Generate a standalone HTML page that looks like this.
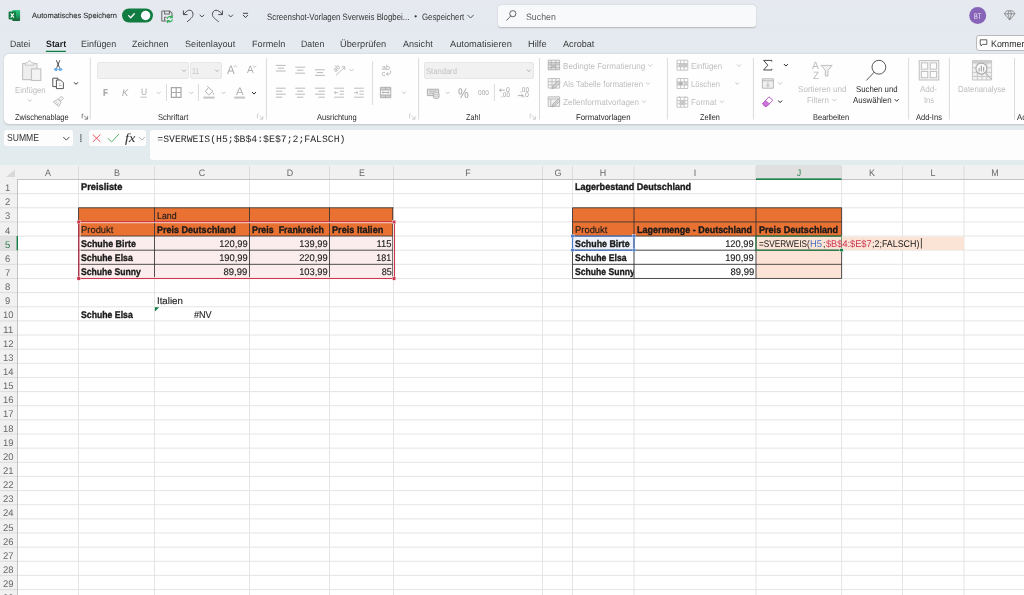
<!DOCTYPE html>
<html lang="de"><head><meta charset="utf-8"><title>Excel</title>
<style>
html,body{margin:0;padding:0}
body{width:1024px;height:595px;overflow:hidden;background:linear-gradient(180deg,#E6E9F0 0px,#E4EAEF 60px,#E2EBEE 165px,#E2EBEE 100%);font-family:"Liberation Sans", sans-serif;position:relative}
.t{position:absolute;white-space:pre;line-height:1;display:block;text-rendering:geometricPrecision}
.abs{position:absolute}

.rib{position:absolute;left:3.8px;top:53.8px;width:1030px;height:70px;background:#FEFEFE;border-radius:5px;box-shadow:0 0.5px 2px rgba(0,0,0,.16)}
.box{position:absolute;background:#FDFDFD;border-radius:2.5px}
.combo{position:absolute;background:#F1F1F1;border-radius:3px;top:62px;height:16.5px;box-shadow:inset 0 0 0 0.7px #E2E2E2}
svg{position:absolute;left:0;top:0;overflow:visible}

</style></head><body>
<div class="abs" style="left:497.8px;top:5px;width:258.6px;height:21.8px;background:#F8F9FA;border-radius:3px;box-shadow:0 0.5px 1.5px rgba(0,0,0,.22)"></div><div class="abs" style="left:976px;top:34.9px;width:60px;height:16.4px;background:#FDFDFD;border:0.8px solid #B9B9B9;border-radius:3px;box-sizing:border-box"></div><div class="rib"></div><div class="combo" style="left:96.6px;width:92.0px"></div><div class="combo" style="left:190.2px;width:31.4px"></div><div class="combo" style="left:424px;width:109.8px"></div><div class="box" style="left:3.8px;top:130px;width:69.6px;height:16px"></div><div class="box" style="left:88.7px;top:130px;width:57.3px;height:16px"></div><div class="box" style="left:149.8px;top:130px;width:880px;height:30px;border-radius:3px"></div><svg width="1024" height="595" viewBox="0 0 1024 595"><rect x="0" y="165.0" width="1024" height="430.0" fill="#fff"/>
<rect x="0" y="165.0" width="1024" height="14.5" fill="#F1F1F1"/>
<rect x="0" y="165.0" width="17.5" height="430.0" fill="#F1F1F1"/>
<rect x="756" y="165.0" width="85.6" height="14.5" fill="#E0E0E0"/>
<rect x="0" y="236.06" width="17.5" height="14.14" fill="#E1E1E1"/>
<path d="M17.5 193.64H1024M17.5 207.78H1024M17.5 221.92H1024M17.5 236.06H1024M17.5 250.20H1024M17.5 264.34H1024M17.5 278.48H1024M17.5 292.62H1024M17.5 306.76H1024M17.5 320.90H1024M17.5 335.04H1024M17.5 349.18H1024M17.5 363.32H1024M17.5 377.46H1024M17.5 391.60H1024M17.5 405.74H1024M17.5 419.88H1024M17.5 434.02H1024M17.5 448.16H1024M17.5 462.30H1024M17.5 476.44H1024M17.5 490.58H1024M17.5 504.72H1024M17.5 518.86H1024M17.5 533.00H1024M17.5 547.14H1024M17.5 561.28H1024M17.5 575.42H1024M17.5 589.56H1024M17.5 603.70H1024M78.5 179.5V595M154.5 179.5V595M249.5 179.5V595M329.5 179.5V595M393.5 179.5V595M542.5 179.5V595M572.5 179.5V595M634.0 179.5V595M756.0 179.5V595M841.6 179.5V595M902.5 179.5V595M964.0 179.5V595" stroke="#E2E2E2" stroke-width="0.9" fill="none"/>
<path d="M78.5 166.0V179.5M154.5 166.0V179.5M249.5 166.0V179.5M329.5 166.0V179.5M393.5 166.0V179.5M542.5 166.0V179.5M572.5 166.0V179.5M634.0 166.0V179.5M756.0 166.0V179.5M841.6 166.0V179.5M902.5 166.0V179.5M964.0 166.0V179.5M0 193.64H17.5M0 207.78H17.5M0 221.92H17.5M0 236.06H17.5M0 250.20H17.5M0 264.34H17.5M0 278.48H17.5M0 292.62H17.5M0 306.76H17.5M0 320.90H17.5M0 335.04H17.5M0 349.18H17.5M0 363.32H17.5M0 377.46H17.5M0 391.60H17.5M0 405.74H17.5M0 419.88H17.5M0 434.02H17.5M0 448.16H17.5M0 462.30H17.5M0 476.44H17.5M0 490.58H17.5M0 504.72H17.5M0 518.86H17.5M0 533.00H17.5M0 547.14H17.5M0 561.28H17.5M0 575.42H17.5M0 589.56H17.5M0 603.70H17.5" stroke="#D9D9D9" stroke-width="0.9" fill="none"/>
<path d="M17.5 179.5H1024M17.5 179.0V595" stroke="#BCBCBC" stroke-width="0.9" fill="none"/>
<path d="M15 169.4V176.9H5.8z" fill="#D9D9D9"/>
<rect x="756" y="178.4" width="85.6" height="1.5" fill="#107C41"/>
<rect x="16.6" y="236.06" width="1.4" height="14.14" fill="#107C41"/>
<rect x="78.5" y="207.78" width="314.6" height="28.28" fill="#E97132"/>
<rect x="78.5" y="236.06" width="314.6" height="42.42" fill="#FBECED"/>
<path d="M78.5 207.78H393.5M78.5 236.06H393.5M78.5 250.20H393.5M78.5 264.34H393.5M78.5 278.48H393.5M78.5 207.78V278.48M154.5 207.78V278.48M249.5 207.78V278.48M329.5 207.78V278.48M392.7 207.78V278.48" stroke="#333333" stroke-width="0.85" fill="none"/>
<rect x="80.0" y="222.72" width="313.4" height="54.66" fill="none" stroke="#FFF6F2" stroke-width="0.9"/>
<rect x="78.9" y="221.62" width="315.6" height="56.86" fill="none" stroke="#C9364E" stroke-width="1.1"/>
<rect x="77.00" y="220.22" width="3.4" height="3.4" fill="#C9364E" stroke="#fff" stroke-width="0.4"/>
<rect x="392.40" y="220.22" width="3.4" height="3.4" fill="#C9364E" stroke="#fff" stroke-width="0.4"/>
<rect x="77.00" y="276.78" width="3.4" height="3.4" fill="#C9364E" stroke="#fff" stroke-width="0.4"/>
<rect x="392.40" y="276.78" width="3.4" height="3.4" fill="#C9364E" stroke="#fff" stroke-width="0.4"/>
<path d="M154.9 307.16h4.3l-4.3 4.3z" fill="#107C41"/>
<rect x="572.5" y="207.78" width="269.1" height="28.28" fill="#E97132"/>
<rect x="756" y="236.06" width="85.6" height="42.42" fill="#FBE3D6"/>
<rect x="841.6" y="236.66" width="122.4" height="13.34" fill="#FBE3D6"/>
<rect x="572.5" y="236.06" width="61.5" height="14.14" fill="#EDF2FA"/>
<path d="M572.5 207.78H841.6M572.5 221.92H841.6M572.5 236.06H841.6M572.5 250.20H841.6M572.5 264.34H841.6M572.5 278.48H841.6M572.5 207.78V278.48M634 207.78V278.48M756 207.78V278.48M841.6 207.78V278.48" stroke="#333333" stroke-width="0.85" fill="none"/>
<rect x="572.5" y="236.06" width="61.5" height="14.14" fill="none" stroke="#4A78C8" stroke-width="1.2"/>
<rect x="570.90" y="234.46" width="3.2" height="3.2" fill="#4A78C8" stroke="#fff" stroke-width="0.4"/>
<rect x="632.40" y="234.46" width="3.2" height="3.2" fill="#4A78C8" stroke="#fff" stroke-width="0.4"/>
<rect x="570.90" y="248.60" width="3.2" height="3.2" fill="#4A78C8" stroke="#fff" stroke-width="0.4"/>
<rect x="632.40" y="248.60" width="3.2" height="3.2" fill="#4A78C8" stroke="#fff" stroke-width="0.4"/>
<rect x="756" y="236.06" width="85.6" height="14.14" fill="none" stroke="#107C41" stroke-width="1.05"/>
<rect x="841.6" y="235.66" width="2" height="14.94" fill="#FBE3D6"/>
<rect x="839.8" y="248.60" width="3.4" height="3.2" fill="#107C41" stroke="#fff" stroke-width="0.5"/>
<path d="M921.4 238.06V248.60" stroke="#222" stroke-width="0.8"/></svg><svg width="1024" height="165" viewBox="0 0 1024 165" style="will-change:transform"><defs><linearGradient id="xg" x1="0" y1="0" x2="0" y2="1"><stop offset="0" stop-color="#33C481"/><stop offset=".5" stop-color="#21A366"/><stop offset="1" stop-color="#185C37"/></linearGradient></defs>
<rect x="12.2" y="9.9" width="7.9" height="11.2" rx="1" fill="url(#xg)"/>
<rect x="8.6" y="11.6" width="7.4" height="7.8" rx=".8" fill="#107C41"/>
<path d="M10.7 13.4l3.2 4.2M13.9 13.4l-3.2 4.2" stroke="#fff" stroke-width="1.1" fill="none"/>
<rect x="122" y="8.6" width="31" height="13.8" rx="6.9" fill="#107C41"/>
<circle cx="145.6" cy="15.5" r="4.7" fill="#fff"/>
<path d="M128.6 15.6l2.1 2.1 3.6-4" fill="none" stroke="#fff" stroke-width="1.3" stroke-linecap="round" stroke-linejoin="round"/>
<path d="M161.8 11h8l2.2 2.2v3M166.4 20.9h-4.6V11M164.6 11v3h4.8v-3M164.6 20.9v-3.6h2" fill="none" stroke="#6A6A6A" stroke-width="1.05" stroke-linejoin="round"/>
<path d="M167.4 18.4a2.5 2.5 0 0 1 4.4-1M172.2 19.8a2.5 2.5 0 0 1-4.4 1M172.2 15.8v1.9h-1.9M167.4 22.4v-1.9h1.9" fill="none" stroke="#35B05C" stroke-width="1.25" stroke-linecap="round" stroke-linejoin="round"/>
<path d="M183.4 10.9v3.7h3.7M183.7 14.3C185.5 11.6 188 10.2 189.8 10.2 192 10.2 193 12.4 193 14.6 193 17.2 190 19.5 187.3 21.6" fill="none" stroke="#4A4A4A" stroke-width="1" stroke-linecap="round" stroke-linejoin="round"/>
<path d="M199.95 15.00L201.90 17.00L203.85 15.00" fill="none" stroke="#444" stroke-width="0.95" stroke-linecap="round" stroke-linejoin="round"/>
<path d="M222.4 10.9v3.7h-3.7M222.1 14.3C220.3 11.6 217.8 10.2 216 10.2 213.8 10.2 212.4 12.4 212.4 14.6 212.4 17.2 215.8 19.5 218.5 21.6" fill="none" stroke="#4A4A4A" stroke-width="1" stroke-linecap="round" stroke-linejoin="round"/>
<path d="M228.75 15.00L230.70 17.00L232.65 15.00" fill="none" stroke="#444" stroke-width="0.95" stroke-linecap="round" stroke-linejoin="round"/>
<path d="M243 13.3h5" stroke="#444" stroke-width="1" fill="none"/>
<path d="M243.30 15.20L245.50 17.60L247.70 15.20" fill="none" stroke="#444" stroke-width="1" stroke-linecap="round" stroke-linejoin="round"/>
<path d="M467.80 15.20L470.60 18.00L473.40 15.20" fill="none" stroke="#444" stroke-width="0.9" stroke-linecap="round" stroke-linejoin="round"/>
<circle cx="512.8" cy="13.7" r="3.1" fill="none" stroke="#555" stroke-width="0.9"/><path d="M510.7 16l-4 4.3" stroke="#555" stroke-width="0.9" stroke-linecap="round"/>
<circle cx="977.7" cy="15.4" r="8.5" fill="#8764B8"/>
<path d="M1006.7 10.8h6l2.3 3-5.3 6.2-5.3-6.2zM1004.6 13.8h10.2M1007.9 13.8l1.8 6M1011.5 13.8l-1.8 6M1007.9 13.8l1.2-3M1011.5 13.8l-1.2-3" fill="none" stroke="#777" stroke-width="0.75" stroke-linejoin="round"/>
<rect x="45.7" y="50.7" width="20.3" height="1.2" rx=".6" fill="#107C41"/>
<path d="M980.2 39.8h6.6v4.6h-4.2l-1.6 1.6v-1.6h-.8z" fill="none" stroke="#444" stroke-width="0.85" stroke-linejoin="round"/>
<path d="M22.6 63.6h14.4v16h-14.4z" fill="#EEEEEE" stroke="#C4C4C4" stroke-width="1.1" stroke-linejoin="round"/>
<path d="M25.4 65.2v-2.4h2.2l2-2.6 2 2.6h2.2v2.4z" fill="#F6F6F6" stroke="#C4C4C4" stroke-width="0.9" stroke-linejoin="round"/>
<rect x="31.5" y="68.9" width="9.3" height="11.6" fill="#F3F3F3" stroke="#C2C2C2" stroke-width="1.1"/>
<path d="M28.20 99.75L29.80 101.45L31.40 99.75" fill="none" stroke="#BEBEBE" stroke-width="0.85" stroke-linecap="round" stroke-linejoin="round"/>
<path d="M56.3 60.2l3.2 7.6M59.9 60.2l-3.2 7.6" stroke="#4A4A4A" stroke-width="0.95" fill="none"/>
<ellipse cx="55.9" cy="69.4" rx="1.5" ry="1" fill="#8CC3F0" stroke="#2F8DDC" stroke-width="0.8"/><ellipse cx="60.4" cy="69.4" rx="1.5" ry="1" fill="#8CC3F0" stroke="#2F8DDC" stroke-width="0.8"/>
<path d="M56.4 86.6h-3.6v-8.4h5.2M58 78.2v1.6" fill="none" stroke="#444" stroke-width="0.9"/>
<path d="M56.4 80h4.2l2.8 2.8v5.8h-7z" fill="#FDFDFD" stroke="#444" stroke-width="0.9" stroke-linejoin="round"/><path d="M59 85.6h2.6M59 83.8h1.4" stroke="#888" stroke-width="0.7"/>
<path d="M74.30 82.60L76.00 84.40L77.70 82.60" fill="none" stroke="#2A2A2A" stroke-width="1" stroke-linecap="round" stroke-linejoin="round"/>
<path d="M61.2 96.2l2.4 2.2-2.6 2.8-2.4-2.2zM58 99.2l3.2 3-2.4 4.4-5.6-4.8zM55.2 103.2l1.8-1.2M57 104.8l1.6-1.4" fill="#F2F2F2" stroke="#BDBDBD" stroke-width="0.9" stroke-linejoin="round"/>
<path d="M82.20 118.40V114.20M82.20 114.20H83.40M84.20 115.80L87.40 119.00M87.60 116.20V119.20H84.60" fill="none" stroke="#666" stroke-width="0.8"/>
<path d="M90.3 58V119.5" stroke="#D6D6D6" stroke-width="0.9" fill="none"/>
<path d="M182.40 69.95L184.00 71.65L185.60 69.95" fill="none" stroke="#A8A8A8" stroke-width="0.85" stroke-linecap="round" stroke-linejoin="round"/>
<path d="M215.40 69.95L217.00 71.65L218.60 69.95" fill="none" stroke="#A8A8A8" stroke-width="0.85" stroke-linecap="round" stroke-linejoin="round"/>
<path d="M233.90 66.90L235.20 65.50L236.50 66.90" fill="none" stroke="#AFAFAF" stroke-width="0.7" stroke-linecap="round" stroke-linejoin="round"/>
<path d="M253.30 65.90L254.60 67.30L255.90 65.90" fill="none" stroke="#AFAFAF" stroke-width="0.7" stroke-linecap="round" stroke-linejoin="round"/>
<path d="M140.4 97.2h6.4" stroke="#B4B4B4" stroke-width="0.8"/>
<path d="M157.10 92.15L158.70 93.85L160.30 92.15" fill="none" stroke="#BEBEBE" stroke-width="0.85" stroke-linecap="round" stroke-linejoin="round"/>
<path d="M166.5 84V101" stroke="#D6D6D6" stroke-width="0.9" fill="none"/>
<path d="M171.4 87.6h9.6v9.8h-9.6zM176.2 87.6v9.8M171.4 92.5h9.6" fill="none" stroke="#A8A8A8" stroke-width="1.2"/>
<path d="M189.70 92.15L191.30 93.85L192.90 92.15" fill="none" stroke="#BEBEBE" stroke-width="0.85" stroke-linecap="round" stroke-linejoin="round"/>
<path d="M198.4 84V101" stroke="#D6D6D6" stroke-width="0.9" fill="none"/>
<path d="M208.6 87.4l4.4 4-4.2 3.6-3.4-3.6zM208.6 87.4l-1.4-1.2M213 92.6c.8 1 .8 1.8 0 2.2" fill="none" stroke="#ADADAD" stroke-width="0.9" stroke-linejoin="round"/>
<rect x="203.4" y="96.6" width="11.2" height="2" fill="#C4C4C4"/>
<path d="M221.90 92.15L223.50 93.85L225.10 92.15" fill="none" stroke="#BEBEBE" stroke-width="0.85" stroke-linecap="round" stroke-linejoin="round"/>
<rect x="234.2" y="96.6" width="10.8" height="2" fill="#C4C4C4"/>
<path d="M252.30 92.30L254.00 94.10L255.70 92.30" fill="none" stroke="#2A2A2A" stroke-width="1" stroke-linecap="round" stroke-linejoin="round"/>
<path d="M257.40 118.40V114.20M257.40 114.20H258.60M259.40 115.80L262.60 119.00M262.80 116.20V119.20H259.80" fill="none" stroke="#C4C4C4" stroke-width="0.8"/>
<path d="M266.4 58V119.5" stroke="#D6D6D6" stroke-width="0.9" fill="none"/>
<path d="M275.90 65.4h9.8M277.60 68.2h6.4M275.90 71.0h9.8" stroke="#B2B2B2" stroke-width="0.9" fill="none"/>
<path d="M295.30 67.2h9.8M297.00 70.2h6.4M295.30 73.2h9.8" stroke="#B2B2B2" stroke-width="0.9" fill="none"/>
<path d="M315.00 69.8h9.8M316.70 72.6h6.4M315.00 75.4h9.8" stroke="#B2B2B2" stroke-width="0.9" fill="none"/>
<path d="M336 75.4l8.4-8.2M344.8 66.8h-3M344.8 66.8v3" fill="none" stroke="#B2B2B2" stroke-width="0.85"/>
<text x="0" y="0" transform="translate(335.4 72.4) rotate(-42)" font-family="Liberation Sans, sans-serif" font-size="7" fill="#A9A9A9" textLength="7" lengthAdjust="spacingAndGlyphs">ab</text>
<path d="M349.90 69.35L351.50 71.05L353.10 69.35" fill="none" stroke="#BEBEBE" stroke-width="0.85" stroke-linecap="round" stroke-linejoin="round"/>
<path d="M275.90 88.2h9.8M275.90 91.2h6.4M275.90 94.2h9.8M275.90 97.2h6.4" stroke="#B2B2B2" stroke-width="0.9" fill="none"/>
<path d="M295.30 88.2h9.8M297.00 91.2h6.4M295.30 94.2h9.8M297.00 97.2h6.4" stroke="#B2B2B2" stroke-width="0.9" fill="none"/>
<path d="M315.00 88.2h9.8M318.40 91.2h6.4M315.00 94.2h9.8M318.40 97.2h6.4" stroke="#B2B2B2" stroke-width="0.9" fill="none"/>
<path d="M334.2 88.2h9.8M339.6 91.2h4.4M339.6 94.2h4.4M334.2 97.2h9.8M334.4 92.7h3.8M335.8 91.4l-1.4 1.3 1.4 1.3" fill="none" stroke="#B2B2B2" stroke-width="0.85"/>
<path d="M354 88.2h9.8M359.4 91.2h4.4M359.4 94.2h4.4M354 97.2h9.8M354.2 92.7h3.8M356.6 91.4l1.4 1.3-1.4 1.3" fill="none" stroke="#B2B2B2" stroke-width="0.85"/>
<path d="M372.6 61.3V105" stroke="#D6D6D6" stroke-width="0.9" fill="none"/>
<path d="M390.6 70.8v1.4c0 1.2-.8 1.8-2 1.8h-2M388.2 72.4l-1.8 1.6 1.8 1.6" fill="none" stroke="#A9A9A9" stroke-width="0.8"/>
<rect x="380.4" y="87.3" width="10.4" height="10.4" fill="#FAFAFA"/><rect x="380.4" y="87.3" width="10.4" height="2.7" fill="#D0D0D0"/><rect x="380.4" y="95" width="10.4" height="2.7" fill="#D0D0D0"/>
<path d="M380.4 87.3h10.4v10.4h-10.4zM380.4 90h10.4M380.4 95h10.4M385.6 87.3v2.7M385.6 95v2.7M382.2 92.5h6.8M383.4 91.3l-1.2 1.2 1.2 1.2M387.8 91.3l1.2 1.2-1.2 1.2" fill="none" stroke="#ABABAB" stroke-width="0.9"/>
<path d="M402.40 91.95L404.00 93.65L405.60 91.95" fill="none" stroke="#BEBEBE" stroke-width="0.85" stroke-linecap="round" stroke-linejoin="round"/>
<path d="M409.60 118.40V114.20M409.60 114.20H410.80M411.60 115.80L414.80 119.00M415.00 116.20V119.20H412.00" fill="none" stroke="#C4C4C4" stroke-width="0.8"/>
<path d="M418.6 58V119.5" stroke="#D6D6D6" stroke-width="0.9" fill="none"/>
<path d="M527.20 69.95L528.80 71.65L530.40 69.95" fill="none" stroke="#A8A8A8" stroke-width="0.85" stroke-linecap="round" stroke-linejoin="round"/>
<path d="M427.4 89.2h11.2v6.4h-11.2z" fill="#E2E2E2" stroke="#A9A9A9" stroke-width="0.9"/><path d="M429.2 91h2.2M434.4 91h2.2M429.2 93.6h1.8" fill="none" stroke="#A9A9A9" stroke-width="0.8"/><circle cx="432.8" cy="92.2" r="1.3" fill="none" stroke="#A9A9A9" stroke-width="0.7"/>
<path d="M433.4 93.8v3.6c0 .7 1.3 1.2 2.8 1.2s2.8-.5 2.8-1.2v-3.6z" fill="#F0F0F0" stroke="#A9A9A9" stroke-width="0.8"/><ellipse cx="436.2" cy="93.8" rx="2.8" ry="1.1" fill="#FDFDFD" stroke="#A9A9A9" stroke-width="0.8"/><path d="M433.4 95.8c0 .7 1.3 1.2 2.8 1.2s2.8-.5 2.8-1.2" fill="none" stroke="#A9A9A9" stroke-width="0.7"/>
<path d="M446.00 92.15L447.60 93.85L449.20 92.15" fill="none" stroke="#BEBEBE" stroke-width="0.85" stroke-linecap="round" stroke-linejoin="round"/>
<path d="M494.4 84V101" stroke="#D6D6D6" stroke-width="0.9" fill="none"/>
<path d="M499.4 90.2h5.4M501.2 88.6l-1.8 1.6 1.8 1.6" fill="none" stroke="#A6A6A6" stroke-width="0.85"/>
<path d="M517.8 95.6h5.4M521.4 94l1.8 1.6-1.8 1.6" fill="none" stroke="#A6A6A6" stroke-width="0.85"/>
<path d="M530.20 118.40V114.20M530.20 114.20H531.40M532.20 115.80L535.40 119.00M535.60 116.20V119.20H532.60" fill="none" stroke="#C4C4C4" stroke-width="0.8"/>
<path d="M539.5 58V119.5" stroke="#D6D6D6" stroke-width="0.9" fill="none"/>
<rect x="548.2" y="60.2" width="11.4" height="9.6" fill="#F4F4F4"/>
<rect x="548.2" y="62.6" width="11.4" height="2.4" fill="#D6D6D6"/><rect x="548.2" y="67.4" width="11.4" height="2.4" fill="#DCDCDC"/><rect x="551.2" y="65.0" width="4.6" height="2.4" fill="#C4C4C4"/>
<path d="M548.2 60.2h11.4v9.6h-11.4zM548.2 62.6h11.4M548.2 65.0h11.4M548.2 67.4h11.4M551.2 60.2v9.6M555.8 60.2v9.6" fill="none" stroke="#B2B2B2" stroke-width="0.9"/>
<rect x="548.2" y="78.5" width="11.4" height="9.6" fill="#F4F4F4"/>
<path d="M548.2 78.5h11.4v9.6h-11.4zM548.2 81.7h11.4M548.2 84.9h11.4M552.0 78.5v9.6M555.8 78.5v9.6" fill="none" stroke="#BDBDBD" stroke-width="0.9"/>
<path d="M551.8 88.7l1.2-3 5.2-5 1.9 1.9-5.2 5z" fill="#E4E4E4" stroke="#A6A6A6" stroke-width="0.85" stroke-linejoin="round"/><path d="M552.6 87.9l5.6-5.6" stroke="#A6A6A6" stroke-width="0.7"/>
<rect x="548.2" y="96.8" width="11.4" height="9.6" fill="#F1F1F1"/>
<path d="M548.2 96.8h11.4v9.6h-11.4zM548.2 99.0h11.4M550.8 99.0v7.4" fill="none" stroke="#B8B8B8" stroke-width="0.9"/>
<path d="M551.8 107.0l1.2-3 5.2-5 1.9 1.9-5.2 5z" fill="#E4E4E4" stroke="#A6A6A6" stroke-width="0.85" stroke-linejoin="round"/><path d="M552.6 106.2l5.6-5.6" stroke="#A6A6A6" stroke-width="0.7"/>
<path d="M648.80 64.75L650.40 66.45L652.00 64.75" fill="none" stroke="#BEBEBE" stroke-width="0.85" stroke-linecap="round" stroke-linejoin="round"/>
<path d="M646.40 82.75L648.00 84.45L649.60 82.75" fill="none" stroke="#BEBEBE" stroke-width="0.85" stroke-linecap="round" stroke-linejoin="round"/>
<path d="M642.30 100.95L643.90 102.65L645.50 100.95" fill="none" stroke="#BEBEBE" stroke-width="0.85" stroke-linecap="round" stroke-linejoin="round"/>
<path d="M667.4 58V119.5" stroke="#D6D6D6" stroke-width="0.9" fill="none"/>
<path d="M677 60.2h10.8v10h-10.8zM677 63.5h10.8M677 66.8h10.8M680.6 60.2v10M684.2 60.2v10" fill="none" stroke="#BDBDBD" stroke-width="0.85"/>
<rect x="680.6" y="63.5" width="7.2" height="3.3" fill="#C8C8C8"/><path d="M677.4 65.2h2.6M678.8 64.1l1.2 1.1-1.2 1.1" stroke="#AAA" stroke-width="0.7" fill="none"/>
<path d="M677 78.5h10.8v10h-10.8zM677 81.8h10.8M677 85.1h10.8M680.6 78.5v10M684.2 78.5v10" fill="none" stroke="#BDBDBD" stroke-width="0.85"/>
<rect x="677" y="81.8" width="6" height="3.3" fill="#C8C8C8"/><path d="M684.6 81.9l2.8 3.2M687.4 81.9l-2.8 3.2" stroke="#AAA" stroke-width="0.8" fill="none"/><circle cx="680.8" cy="83.5" r="1.5" fill="#AFAFAF"/>
<path d="M677 97.2h10.8v10h-10.8zM677 100.5h10.8M677 103.8h10.8M680.6 97.2v10M684.2 97.2v10" fill="none" stroke="#BDBDBD" stroke-width="0.85"/>
<rect x="679.4" y="100.5" width="6" height="4.6" fill="#C8C8C8"/><path d="M679.4 96.2v2M685.4 96.2v2" stroke="#BDBDBD" stroke-width="0.8"/>
<path d="M737.30 64.75L738.90 66.45L740.50 64.75" fill="none" stroke="#BEBEBE" stroke-width="0.85" stroke-linecap="round" stroke-linejoin="round"/>
<path d="M735.70 82.75L737.30 84.45L738.90 82.75" fill="none" stroke="#BEBEBE" stroke-width="0.85" stroke-linecap="round" stroke-linejoin="round"/>
<path d="M720.30 100.95L721.90 102.65L723.50 100.95" fill="none" stroke="#BEBEBE" stroke-width="0.85" stroke-linecap="round" stroke-linejoin="round"/>
<path d="M753.4 58V119.5" stroke="#D6D6D6" stroke-width="0.9" fill="none"/>
<path d="M771.8 61.6v-1.2h-8.2l4.2 4.8-4.2 4.8h8.2v-1.2" fill="none" stroke="#333" stroke-width="0.9" stroke-linejoin="miter"/>
<path d="M784.20 64.30L785.90 66.10L787.60 64.30" fill="none" stroke="#2A2A2A" stroke-width="1" stroke-linecap="round" stroke-linejoin="round"/>
<path d="M762.4 78.8h11v9.4h-11zM762.4 80.8h11" fill="#F1F1F1" stroke="#B0B0B0" stroke-width="0.9"/><path d="M767.9 82.2v4.2M766 84.8l1.9 1.8 1.9-1.8" fill="none" stroke="#B0B0B0" stroke-width="0.8"/>
<path d="M778.60 82.65L780.20 84.35L781.80 82.65" fill="none" stroke="#BEBEBE" stroke-width="0.85" stroke-linecap="round" stroke-linejoin="round"/>
<path d="M769 96.8l3.8 3.4-6 6.2h-1.6l-2.8-2.6z" fill="none" stroke="#B653C6" stroke-width="0.95" stroke-linejoin="round"/><path d="M765.6 100.4l3.8 3.4-2.6 2.6h-1.6l-2.8-2.6z" fill="#C873D6" stroke="#B653C6" stroke-width="0.6" stroke-linejoin="round"/>
<path d="M778.50 100.80L780.20 102.60L781.90 100.80" fill="none" stroke="#2A2A2A" stroke-width="1" stroke-linecap="round" stroke-linejoin="round"/>
<path d="M821 65.4h11.2l-4.3 5v5.6h-2.6v-5.6z" fill="#F1F1F1" stroke="#BDBDBD" stroke-width="0.95" stroke-linejoin="round"/>
<path d="M832.80 99.35L834.40 101.05L836.00 99.35" fill="none" stroke="#BEBEBE" stroke-width="0.85" stroke-linecap="round" stroke-linejoin="round"/>
<circle cx="878.9" cy="67.2" r="6.9" fill="none" stroke="#444" stroke-width="0.9"/><path d="M874 72.4l-7.4 7.8" stroke="#444" stroke-width="0.9" stroke-linecap="round"/>
<path d="M895.00 99.50L896.70 101.30L898.40 99.50" fill="none" stroke="#2A2A2A" stroke-width="0.95" stroke-linecap="round" stroke-linejoin="round"/>
<path d="M908.6 58V119.5" stroke="#D6D6D6" stroke-width="0.9" fill="none"/>
<rect x="919.2" y="60.6" width="19.6" height="19.4" fill="#F1F1F1" stroke="#BEBEBE" stroke-width="0.95"/>
<rect x="921.5" y="62.9" width="6.2" height="6.2" fill="#FCFCFC" stroke="#BEBEBE" stroke-width="0.9"/>
<rect x="930.3" y="62.9" width="6.2" height="6.2" fill="#FCFCFC" stroke="#BEBEBE" stroke-width="0.9"/>
<rect x="921.5" y="71.5" width="6.2" height="6.2" fill="#FCFCFC" stroke="#BEBEBE" stroke-width="0.9"/>
<rect x="930.3" y="71.5" width="6.2" height="6.2" fill="#FCFCFC" stroke="#BEBEBE" stroke-width="0.9"/>
<path d="M949.4 58V119.5" stroke="#D6D6D6" stroke-width="0.9" fill="none"/>
<rect x="972.4" y="60.6" width="19.2" height="19.4" fill="#F0F0F0"/><rect x="972.4" y="60.6" width="19.2" height="2.4" fill="#D2D2D2"/>
<path d="M972.4 60.6h19.2v19.4h-19.2zM972.4 63h19.2M972.4 67.8h19.2M972.4 72.4h19.2M972.4 76.4h19.2M977.4 63v17M982 63v17M986.8 63v17" fill="none" stroke="#C2C2C2" stroke-width="0.85"/>
<circle cx="981.4" cy="68.6" r="5.5" fill="#F8F8F8" stroke="#ABABAB" stroke-width="1.1"/><path d="M985.4 72.8l6.2 6.8" stroke="#ABABAB" stroke-width="1"/><path d="M979.2 71.4v-3.4M981.4 71.4v-5.6M983.6 71.4v-4.4" stroke="#ABABAB" stroke-width="1.2"/>
<path d="M1014.5 58V119.5" stroke="#D6D6D6" stroke-width="0.9" fill="none"/>
<path d="M63.50 137.25L66.30 140.15L69.10 137.25" fill="none" stroke="#444" stroke-width="0.95" stroke-linecap="round" stroke-linejoin="round"/>
<g fill="#4A4A4A"><rect x="80.2" y="134.3" width="1.3" height="1.3"/><rect x="80.2" y="136.4" width="1.3" height="1.3"/><rect x="80.2" y="138.5" width="1.3" height="1.3"/><rect x="80.2" y="140.6" width="1.3" height="1.3"/></g>
<path d="M92.8 134.5l7.6 7.4M100.4 134.5l-7.6 7.4" stroke="#E8505B" stroke-width="0.95" fill="none"/>
<path d="M108.2 138.6l3.5 3.3 6.9-7.5" stroke="#4CAF62" stroke-width="0.95" fill="none" stroke-linecap="round" stroke-linejoin="round"/>
<path d="M139.20 137.30L141.90 140.10L144.60 137.30" fill="none" stroke="#9A9A9A" stroke-width="0.8" stroke-linecap="round" stroke-linejoin="round"/></svg>
<div id="txt" style="position:absolute;left:0;top:0;width:1024px;height:595px;will-change:transform">
<span class="t" style="top:11.79px;font-size:7.6px;color:#2E2E2E;left:32.00px;transform-origin:0 50%;-webkit-text-stroke:0.1px #2E2E2E;transform:scaleX(0.9871);">Automatisches Speichern</span>
<span class="t" style="top:13.21px;font-size:9.2px;color:#333;left:266.60px;transform-origin:0 50%;transform:scaleX(0.8553);">Screenshot-Vorlagen Sverweis Blogbei...</span>
<span class="t" style="top:13.49px;font-size:8px;color:#333;left:414.30px;transform-origin:0 50%;">•</span>
<span class="t" style="top:13.21px;font-size:9.2px;color:#333;left:421.80px;transform-origin:0 50%;transform:scaleX(0.8517);">Gespeichert</span>
<span class="t" style="top:13.16px;font-size:9.3px;color:#5E5E5E;left:526.00px;transform-origin:0 50%;transform:scaleX(0.9446);">Suchen</span>
<span class="t" style="top:13.49px;font-size:8px;color:#F1ECF8;left:973.70px;transform-origin:0 50%;transform:scaleX(0.7133);">BT</span>
<span class="t" style="top:39.71px;font-size:9.2px;color:#3A3A3A;left:9.90px;transform-origin:0 50%;transform:scaleX(0.9462);">Datei</span>
<span class="t" style="top:39.71px;font-size:9.2px;color:#3A3A3A;left:80.70px;transform-origin:0 50%;transform:scaleX(0.9730);">Einfügen</span>
<span class="t" style="top:39.71px;font-size:9.2px;color:#3A3A3A;left:131.60px;transform-origin:0 50%;transform:scaleX(0.9657);">Zeichnen</span>
<span class="t" style="top:39.71px;font-size:9.2px;color:#3A3A3A;left:184.70px;transform-origin:0 50%;transform:scaleX(0.9925);">Seitenlayout</span>
<span class="t" style="top:39.71px;font-size:9.2px;color:#3A3A3A;left:251.50px;transform-origin:0 50%;transform:scaleX(0.9910);">Formeln</span>
<span class="t" style="top:39.71px;font-size:9.2px;color:#3A3A3A;left:300.70px;transform-origin:0 50%;transform:scaleX(0.9498);">Daten</span>
<span class="t" style="top:39.71px;font-size:9.2px;color:#3A3A3A;left:340.00px;transform-origin:0 50%;transform:scaleX(1.0050);">Überprüfen</span>
<span class="t" style="top:39.71px;font-size:9.2px;color:#3A3A3A;left:403.00px;transform-origin:0 50%;transform:scaleX(0.9854);">Ansicht</span>
<span class="t" style="top:39.71px;font-size:9.2px;color:#3A3A3A;left:449.50px;transform-origin:0 50%;transform:scaleX(1.0085);">Automatisieren</span>
<span class="t" style="top:39.71px;font-size:9.2px;color:#3A3A3A;left:527.90px;transform-origin:0 50%;transform:scaleX(1.0114);">Hilfe</span>
<span class="t" style="top:39.71px;font-size:9.2px;color:#3A3A3A;left:562.80px;transform-origin:0 50%;transform:scaleX(0.9914);">Acrobat</span>
<span class="t" style="top:39.71px;font-size:9.2px;color:#1E1E1E;left:45.70px;transform-origin:0 50%;font-weight:700;transform:scaleX(0.9600);">Start</span>
<span class="t" style="top:39.56px;font-size:9.5px;color:#2A2A2A;left:990.90px;transform-origin:0 50%;transform:scaleX(0.9300);">Kommentare</span>
<span class="t" style="top:86.30px;font-size:8.6px;color:#BEBEBE;left:14.90px;transform-origin:0 50%;transform:scaleX(0.9046);">Einfügen</span>
<span class="t" style="top:112.80px;font-size:8.4px;color:#2A2A2A;left:15.40px;transform-origin:0 50%;transform:scaleX(0.8855);">Zwischenablage</span>
<span class="t" style="top:66.80px;font-size:8.6px;color:#C6C6C6;left:192.20px;transform-origin:0 50%;transform:scaleX(0.8070);">11</span>
<span class="t" style="top:63.54px;font-size:12.4px;color:#AFAFAF;left:226.70px;transform-origin:0 50%;transform:scaleX(0.9316);">A</span>
<span class="t" style="top:65.12px;font-size:10.6px;color:#AFAFAF;left:246.80px;transform-origin:0 50%;transform:scaleX(0.9325);">A</span>
<span class="t" style="top:88.52px;font-size:10px;color:#9C9C9C;left:102.70px;transform-origin:0 50%;font-weight:700;transform:scaleX(0.8184);">F</span>
<span class="t" style="top:88.52px;font-size:10px;color:#ABABAB;left:121.60px;transform-origin:0 50%;font-style:italic;transform:scaleX(0.9293);">K</span>
<span class="t" style="top:88.01px;font-size:9.6px;color:#ABABAB;left:140.50px;transform-origin:0 50%;transform:scaleX(0.8793);">U</span>
<span class="t" style="top:86.93px;font-size:11px;color:#ADADAD;left:235.80px;transform-origin:0 50%;transform:scaleX(1.0349);">A</span>
<span class="t" style="top:112.80px;font-size:8.4px;color:#2A2A2A;left:157.70px;transform-origin:0 50%;transform:scaleX(0.9041);">Schriftart</span>
<span class="t" style="top:64.19px;font-size:7.6px;color:#A9A9A9;left:382.20px;transform-origin:0 50%;transform:scaleX(0.9227);">ab</span>
<span class="t" style="top:69.69px;font-size:7.6px;color:#A9A9A9;left:382.40px;transform-origin:0 50%;transform:scaleX(0.9000);">c</span>
<span class="t" style="top:112.80px;font-size:8.4px;color:#2A2A2A;left:316.50px;transform-origin:0 50%;transform:scaleX(0.8975);">Ausrichtung</span>
<span class="t" style="top:66.90px;font-size:8.6px;color:#C2C2C2;left:426.40px;transform-origin:0 50%;transform:scaleX(0.8856);">Standard</span>
<span class="t" style="top:86.36px;font-size:14px;color:#A2A2A2;left:458.40px;transform-origin:0 50%;transform:scaleX(0.8673);">%</span>
<span class="t" style="top:91.08px;font-size:6.8px;color:#ABABAB;left:477.50px;transform-origin:0 50%;transform:scaleX(0.9609);">000</span>
<span class="t" style="top:87.58px;font-size:6.8px;color:#A6A6A6;left:506.00px;transform-origin:0 50%;">0</span>
<span class="t" style="top:93.08px;font-size:6.8px;color:#A6A6A6;left:501.00px;transform-origin:0 50%;transform:scaleX(0.9521);">,00</span>
<span class="t" style="top:87.58px;font-size:6.8px;color:#A6A6A6;left:520.20px;transform-origin:0 50%;transform:scaleX(0.9521);">,00</span>
<span class="t" style="top:93.08px;font-size:6.8px;color:#A6A6A6;left:523.40px;transform-origin:0 50%;transform:scaleX(1.0226);">,0</span>
<span class="t" style="top:112.80px;font-size:8.4px;color:#2A2A2A;left:465.90px;transform-origin:0 50%;transform:scaleX(0.8652);">Zahl</span>
<span class="t" style="top:62.20px;font-size:8.6px;color:#BEBEBE;left:562.80px;transform-origin:0 50%;transform:scaleX(0.9403);">Bedingte Formatierung</span>
<span class="t" style="top:80.20px;font-size:8.6px;color:#BEBEBE;left:562.80px;transform-origin:0 50%;transform:scaleX(0.9179);">Als Tabelle formatieren</span>
<span class="t" style="top:98.40px;font-size:8.6px;color:#BEBEBE;left:562.80px;transform-origin:0 50%;transform:scaleX(0.9401);">Zellenformatvorlagen</span>
<span class="t" style="top:112.80px;font-size:8.4px;color:#2A2A2A;left:575.80px;transform-origin:0 50%;transform:scaleX(0.9291);">Formatvorlagen</span>
<span class="t" style="top:62.20px;font-size:8.6px;color:#BEBEBE;left:691.00px;transform-origin:0 50%;transform:scaleX(0.9164);">Einfügen</span>
<span class="t" style="top:80.20px;font-size:8.6px;color:#BEBEBE;left:691.00px;transform-origin:0 50%;transform:scaleX(0.8923);">Löschen</span>
<span class="t" style="top:98.40px;font-size:8.6px;color:#BEBEBE;left:691.00px;transform-origin:0 50%;transform:scaleX(0.9405);">Format</span>
<span class="t" style="top:112.80px;font-size:8.4px;color:#2A2A2A;left:700.40px;transform-origin:0 50%;transform:scaleX(0.8679);">Zellen</span>
<span class="t" style="top:60.82px;font-size:10.6px;color:#BDBDBD;left:812.40px;transform-origin:0 50%;transform:scaleX(0.9748);">A</span>
<span class="t" style="top:71.12px;font-size:10.6px;color:#BDBDBD;left:812.80px;transform-origin:0 50%;transform:scaleX(0.9561);">Z</span>
<span class="t" style="top:84.90px;font-size:8.6px;color:#BEBEBE;left:798.30px;transform-origin:0 50%;transform:scaleX(0.9398);">Sortieren und</span>
<span class="t" style="top:96.20px;font-size:8.6px;color:#BEBEBE;left:807.30px;transform-origin:0 50%;transform:scaleX(0.9125);">Filtern</span>
<span class="t" style="top:85.20px;font-size:8.6px;color:#2E2E2E;left:855.60px;transform-origin:0 50%;transform:scaleX(0.9068);">Suchen und</span>
<span class="t" style="top:96.20px;font-size:8.6px;color:#2E2E2E;left:853.00px;transform-origin:0 50%;transform:scaleX(0.9180);">Auswählen</span>
<span class="t" style="top:112.80px;font-size:8.4px;color:#2A2A2A;left:812.80px;transform-origin:0 50%;transform:scaleX(0.8935);">Bearbeiten</span>
<span class="t" style="top:85.20px;font-size:8.6px;color:#BEBEBE;left:920.00px;transform-origin:0 50%;transform:scaleX(0.9363);">Add-</span>
<span class="t" style="top:96.20px;font-size:8.6px;color:#BEBEBE;left:923.90px;transform-origin:0 50%;transform:scaleX(0.8894);">Ins</span>
<span class="t" style="top:112.80px;font-size:8.4px;color:#2A2A2A;left:915.90px;transform-origin:0 50%;transform:scaleX(0.8970);">Add-Ins</span>
<span class="t" style="top:85.20px;font-size:8.6px;color:#BEBEBE;left:958.40px;transform-origin:0 50%;transform:scaleX(0.9056);">Datenanalyse</span>
<span class="t" style="top:112.80px;font-size:8.4px;color:#2A2A2A;left:1016.50px;transform-origin:0 50%;transform:scaleX(0.9300);">Ad</span>
<span class="t" style="top:134.22px;font-size:10.2px;color:#333;left:7.20px;transform-origin:0 50%;transform:scaleX(0.8438);">SUMME</span>
<span class="t" style="top:132.09px;font-size:12.5px;color:#333;left:124.80px;transform-origin:0 50%;-webkit-text-stroke:0.1px #333;font-style:italic;font-family:'Liberation Serif', serif;transform:scaleX(1.1294);">fx</span>
<span class="t" style="top:134.51px;font-size:9.8px;color:#2B2B2B;left:157.30px;transform-origin:0 50%;font-family:'Liberation Mono', monospace;">=SVERWEIS(H5;$B$4:$E$7;2;FALSCH)</span>
<span class="t" style="top:168.01px;font-size:9.4px;color:#686868;left:-2.00px;width:100px;text-align:center;transform-origin:50% 50%;transform:scaleX(0.9500);">A</span>
<span class="t" style="top:168.01px;font-size:9.4px;color:#686868;left:66.50px;width:100px;text-align:center;transform-origin:50% 50%;transform:scaleX(0.9500);">B</span>
<span class="t" style="top:168.01px;font-size:9.4px;color:#686868;left:152.00px;width:100px;text-align:center;transform-origin:50% 50%;transform:scaleX(0.9500);">C</span>
<span class="t" style="top:168.01px;font-size:9.4px;color:#686868;left:239.50px;width:100px;text-align:center;transform-origin:50% 50%;transform:scaleX(0.9500);">D</span>
<span class="t" style="top:168.01px;font-size:9.4px;color:#686868;left:311.50px;width:100px;text-align:center;transform-origin:50% 50%;transform:scaleX(0.9500);">E</span>
<span class="t" style="top:168.01px;font-size:9.4px;color:#686868;left:418.00px;width:100px;text-align:center;transform-origin:50% 50%;transform:scaleX(0.9500);">F</span>
<span class="t" style="top:168.01px;font-size:9.4px;color:#686868;left:507.50px;width:100px;text-align:center;transform-origin:50% 50%;transform:scaleX(0.9500);">G</span>
<span class="t" style="top:168.01px;font-size:9.4px;color:#686868;left:553.25px;width:100px;text-align:center;transform-origin:50% 50%;transform:scaleX(0.9500);">H</span>
<span class="t" style="top:168.01px;font-size:9.4px;color:#686868;left:645.00px;width:100px;text-align:center;transform-origin:50% 50%;transform:scaleX(0.9500);">I</span>
<span class="t" style="top:168.01px;font-size:9.4px;color:#2E7D4F;left:748.80px;width:100px;text-align:center;transform-origin:50% 50%;transform:scaleX(0.9500);">J</span>
<span class="t" style="top:168.01px;font-size:9.4px;color:#686868;left:822.05px;width:100px;text-align:center;transform-origin:50% 50%;transform:scaleX(0.9500);">K</span>
<span class="t" style="top:168.01px;font-size:9.4px;color:#686868;left:883.25px;width:100px;text-align:center;transform-origin:50% 50%;transform:scaleX(0.9500);">L</span>
<span class="t" style="top:168.01px;font-size:9.4px;color:#686868;left:945.40px;width:100px;text-align:center;transform-origin:50% 50%;transform:scaleX(0.9500);">M</span>
<span class="t" style="top:184.18px;font-size:9.6px;color:#686868;left:5.38px;transform-origin:0 50%;transform:scaleX(0.9825);">1</span>
<span class="t" style="top:198.32px;font-size:9.6px;color:#686868;left:5.38px;transform-origin:0 50%;transform:scaleX(0.9825);">2</span>
<span class="t" style="top:212.46px;font-size:9.6px;color:#686868;left:5.38px;transform-origin:0 50%;transform:scaleX(0.9825);">3</span>
<span class="t" style="top:226.60px;font-size:9.6px;color:#686868;left:5.38px;transform-origin:0 50%;transform:scaleX(0.9825);">4</span>
<span class="t" style="top:240.74px;font-size:9.6px;color:#2E7D4F;left:5.38px;transform-origin:0 50%;transform:scaleX(0.9825);">5</span>
<span class="t" style="top:254.88px;font-size:9.6px;color:#686868;left:5.38px;transform-origin:0 50%;transform:scaleX(0.9825);">6</span>
<span class="t" style="top:269.02px;font-size:9.6px;color:#686868;left:5.38px;transform-origin:0 50%;transform:scaleX(0.9825);">7</span>
<span class="t" style="top:283.16px;font-size:9.6px;color:#686868;left:5.38px;transform-origin:0 50%;transform:scaleX(0.9825);">8</span>
<span class="t" style="top:297.30px;font-size:9.6px;color:#686868;left:5.38px;transform-origin:0 50%;transform:scaleX(0.9825);">9</span>
<span class="t" style="top:311.44px;font-size:9.6px;color:#686868;left:2.75px;transform-origin:0 50%;transform:scaleX(0.9839);">10</span>
<span class="t" style="top:325.58px;font-size:9.6px;color:#686868;left:2.75px;transform-origin:0 50%;transform:scaleX(1.0533);">11</span>
<span class="t" style="top:339.72px;font-size:9.6px;color:#686868;left:2.75px;transform-origin:0 50%;transform:scaleX(0.9839);">12</span>
<span class="t" style="top:353.86px;font-size:9.6px;color:#686868;left:2.75px;transform-origin:0 50%;transform:scaleX(0.9839);">13</span>
<span class="t" style="top:368.00px;font-size:9.6px;color:#686868;left:2.75px;transform-origin:0 50%;transform:scaleX(0.9839);">14</span>
<span class="t" style="top:382.14px;font-size:9.6px;color:#686868;left:2.75px;transform-origin:0 50%;transform:scaleX(0.9839);">15</span>
<span class="t" style="top:396.28px;font-size:9.6px;color:#686868;left:2.75px;transform-origin:0 50%;transform:scaleX(0.9839);">16</span>
<span class="t" style="top:410.42px;font-size:9.6px;color:#686868;left:2.75px;transform-origin:0 50%;transform:scaleX(0.9839);">17</span>
<span class="t" style="top:424.56px;font-size:9.6px;color:#686868;left:2.75px;transform-origin:0 50%;transform:scaleX(0.9839);">18</span>
<span class="t" style="top:438.70px;font-size:9.6px;color:#686868;left:2.75px;transform-origin:0 50%;transform:scaleX(0.9839);">19</span>
<span class="t" style="top:452.84px;font-size:9.6px;color:#686868;left:2.75px;transform-origin:0 50%;transform:scaleX(0.9839);">20</span>
<span class="t" style="top:466.98px;font-size:9.6px;color:#686868;left:2.75px;transform-origin:0 50%;transform:scaleX(0.9839);">21</span>
<span class="t" style="top:481.12px;font-size:9.6px;color:#686868;left:2.75px;transform-origin:0 50%;transform:scaleX(0.9839);">22</span>
<span class="t" style="top:495.26px;font-size:9.6px;color:#686868;left:2.75px;transform-origin:0 50%;transform:scaleX(0.9839);">23</span>
<span class="t" style="top:509.40px;font-size:9.6px;color:#686868;left:2.75px;transform-origin:0 50%;transform:scaleX(0.9839);">24</span>
<span class="t" style="top:523.54px;font-size:9.6px;color:#686868;left:2.75px;transform-origin:0 50%;transform:scaleX(0.9839);">25</span>
<span class="t" style="top:537.68px;font-size:9.6px;color:#686868;left:2.75px;transform-origin:0 50%;transform:scaleX(0.9839);">26</span>
<span class="t" style="top:551.82px;font-size:9.6px;color:#686868;left:2.75px;transform-origin:0 50%;transform:scaleX(0.9839);">27</span>
<span class="t" style="top:565.96px;font-size:9.6px;color:#686868;left:2.75px;transform-origin:0 50%;transform:scaleX(0.9839);">28</span>
<span class="t" style="top:580.10px;font-size:9.6px;color:#686868;left:2.75px;transform-origin:0 50%;transform:scaleX(0.9839);">29</span>
<span class="t" style="top:594.24px;font-size:9.6px;color:#686868;left:2.75px;transform-origin:0 50%;transform:scaleX(0.9839);">30</span>
<span class="t" style="top:183.38px;font-size:9.7px;color:#1A1A1A;left:81.00px;transform-origin:0 50%;font-weight:700;-webkit-text-stroke:0.35px #1A1A1A;transform:scaleX(0.9607);">Preisliste</span>
<span class="t" style="top:183.38px;font-size:9.7px;color:#1A1A1A;left:574.90px;transform-origin:0 50%;font-weight:700;-webkit-text-stroke:0.35px #1A1A1A;transform:scaleX(0.9328);">Lagerbestand Deutschland</span>
<span class="t" style="top:211.66px;font-size:9.7px;color:#1A1A1A;left:157.40px;transform-origin:0 50%;-webkit-text-stroke:0.12px #1A1A1A;transform:scaleX(0.9090);">Land</span>
<span class="t" style="top:225.80px;font-size:9.7px;color:#1A1A1A;left:81.40px;transform-origin:0 50%;-webkit-text-stroke:0.12px #1A1A1A;transform:scaleX(0.9703);">Produkt</span>
<span class="t" style="top:225.80px;font-size:9.7px;color:#1A1A1A;left:157.40px;transform-origin:0 50%;font-weight:700;-webkit-text-stroke:0.35px #1A1A1A;transform:scaleX(0.9310);">Preis Deutschland</span>
<span class="t" style="top:225.80px;font-size:9.7px;color:#1A1A1A;left:252.30px;transform-origin:0 50%;font-weight:700;-webkit-text-stroke:0.35px #1A1A1A;transform:scaleX(0.9157);">Preis  Frankreich</span>
<span class="t" style="top:225.80px;font-size:9.7px;color:#1A1A1A;left:331.80px;transform-origin:0 50%;font-weight:700;-webkit-text-stroke:0.35px #1A1A1A;transform:scaleX(0.9432);">Preis Italien</span>
<span class="t" style="top:239.94px;font-size:9.7px;color:#1A1A1A;left:81.10px;transform-origin:0 50%;font-weight:700;-webkit-text-stroke:0.35px #1A1A1A;transform:scaleX(0.9186);">Schuhe Birte</span>
<span class="t" style="top:254.08px;font-size:9.7px;color:#1A1A1A;left:81.10px;transform-origin:0 50%;font-weight:700;-webkit-text-stroke:0.35px #1A1A1A;transform:scaleX(0.8989);">Schuhe Elsa</span>
<span class="t" style="top:268.22px;font-size:9.7px;color:#1A1A1A;left:81.10px;transform-origin:0 50%;font-weight:700;-webkit-text-stroke:0.35px #1A1A1A;transform:scaleX(0.8901);">Schuhe Sunny</span>
<span class="t" style="top:239.94px;font-size:9.7px;color:#1A1A1A;right:776.60px;transform-origin:100% 50%;-webkit-text-stroke:0.12px #1A1A1A;transform:scaleX(0.9615);">120,99</span>
<span class="t" style="top:239.94px;font-size:9.7px;color:#1A1A1A;right:696.70px;transform-origin:100% 50%;-webkit-text-stroke:0.12px #1A1A1A;transform:scaleX(0.9615);">139,99</span>
<span class="t" style="top:239.94px;font-size:9.7px;color:#1A1A1A;right:632.70px;transform-origin:100% 50%;-webkit-text-stroke:0.12px #1A1A1A;transform:scaleX(0.9707);">115</span>
<span class="t" style="top:254.08px;font-size:9.7px;color:#1A1A1A;right:776.60px;transform-origin:100% 50%;-webkit-text-stroke:0.12px #1A1A1A;transform:scaleX(0.9615);">190,99</span>
<span class="t" style="top:254.08px;font-size:9.7px;color:#1A1A1A;right:696.70px;transform-origin:100% 50%;-webkit-text-stroke:0.12px #1A1A1A;transform:scaleX(0.9615);">220,99</span>
<span class="t" style="top:254.08px;font-size:9.7px;color:#1A1A1A;right:632.70px;transform-origin:100% 50%;-webkit-text-stroke:0.12px #1A1A1A;transform:scaleX(0.9275);">181</span>
<span class="t" style="top:268.22px;font-size:9.7px;color:#1A1A1A;right:776.60px;transform-origin:100% 50%;-webkit-text-stroke:0.12px #1A1A1A;transform:scaleX(0.9814);">89,99</span>
<span class="t" style="top:268.22px;font-size:9.7px;color:#1A1A1A;right:696.70px;transform-origin:100% 50%;-webkit-text-stroke:0.12px #1A1A1A;transform:scaleX(0.9615);">103,99</span>
<span class="t" style="top:268.22px;font-size:9.7px;color:#1A1A1A;right:632.70px;transform-origin:100% 50%;-webkit-text-stroke:0.12px #1A1A1A;transform:scaleX(0.9368);">85</span>
<span class="t" style="top:296.50px;font-size:9.7px;color:#1A1A1A;left:157.40px;transform-origin:0 50%;-webkit-text-stroke:0.12px #1A1A1A;transform:scaleX(0.9977);">Italien</span>
<span class="t" style="top:310.64px;font-size:9.7px;color:#1A1A1A;left:81.10px;transform-origin:0 50%;font-weight:700;-webkit-text-stroke:0.35px #1A1A1A;transform:scaleX(0.8989);">Schuhe Elsa</span>
<span class="t" style="top:310.64px;font-size:9.7px;color:#1A1A1A;left:194.20px;transform-origin:0 50%;-webkit-text-stroke:0.12px #1A1A1A;transform:scaleX(0.9332);">#NV</span>
<span class="t" style="top:225.80px;font-size:9.7px;color:#1A1A1A;left:575.40px;transform-origin:0 50%;-webkit-text-stroke:0.12px #1A1A1A;transform:scaleX(0.9703);">Produkt</span>
<span class="t" style="top:225.80px;font-size:9.7px;color:#1A1A1A;left:636.60px;transform-origin:0 50%;font-weight:700;-webkit-text-stroke:0.35px #1A1A1A;transform:scaleX(0.9247);">Lagermenge - Deutschland</span>
<span class="t" style="top:225.80px;font-size:9.7px;color:#1A1A1A;left:758.70px;transform-origin:0 50%;font-weight:700;-webkit-text-stroke:0.35px #1A1A1A;transform:scaleX(0.9357);">Preis Deutschland</span>
<span class="t" style="top:239.94px;font-size:9.7px;color:#1A1A1A;left:575.20px;transform-origin:0 50%;font-weight:700;-webkit-text-stroke:0.35px #1A1A1A;transform:scaleX(0.9136);">Schuhe Birte</span>
<span class="t" style="top:254.08px;font-size:9.7px;color:#1A1A1A;left:575.20px;transform-origin:0 50%;font-weight:700;-webkit-text-stroke:0.35px #1A1A1A;transform:scaleX(0.8954);">Schuhe Elsa</span>
<span class="t" style="top:268.22px;font-size:9.7px;color:#1A1A1A;left:575.20px;transform-origin:0 50%;font-weight:700;-webkit-text-stroke:0.35px #1A1A1A;transform:scaleX(0.8880);"><span style="display:block;width:66.2px;overflow:hidden">Schuhe Sunny</span></span>
<span class="t" style="top:239.94px;font-size:9.7px;color:#1A1A1A;right:270.20px;transform-origin:100% 50%;-webkit-text-stroke:0.12px #1A1A1A;transform:scaleX(0.9615);">120,99</span>
<span class="t" style="top:254.08px;font-size:9.7px;color:#1A1A1A;right:270.20px;transform-origin:100% 50%;-webkit-text-stroke:0.12px #1A1A1A;transform:scaleX(0.9615);">190,99</span>
<span class="t" style="top:268.22px;font-size:9.7px;color:#1A1A1A;right:270.20px;transform-origin:100% 50%;-webkit-text-stroke:0.12px #1A1A1A;transform:scaleX(0.9814);">89,99</span>
<span class="t" style="top:239.94px;font-size:9.7px;color:#1A1A1A;left:759.10px;transform-origin:0 50%;transform:scaleX(0.8470);">=SVERWEIS(</span>
<span class="t" style="top:239.94px;font-size:9.7px;color:#4472C4;left:810.40px;transform-origin:0 50%;transform:scaleX(0.9685);">H5</span>
<span class="t" style="top:239.94px;font-size:9.7px;color:#1A1A1A;left:822.90px;transform-origin:0 50%;transform:scaleX(0.9000);">;</span>
<span class="t" style="top:239.94px;font-size:9.7px;color:#C9364E;left:825.70px;transform-origin:0 50%;transform:scaleX(0.9509);">$B$4:$E$7</span>
<span class="t" style="top:239.94px;font-size:9.7px;color:#1A1A1A;left:872.20px;transform-origin:0 50%;transform:scaleX(0.9170);">;2;FALSCH)</span>
</div>

</body></html>
